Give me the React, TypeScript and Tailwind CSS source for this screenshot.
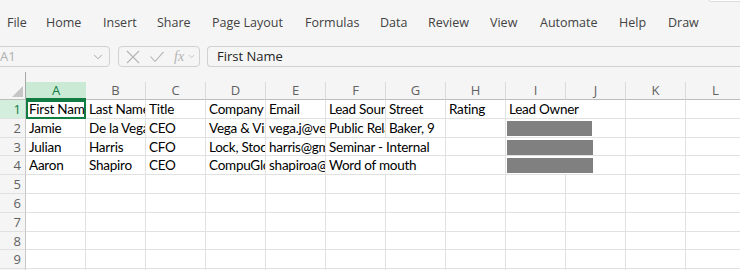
import { ChevronDown } from "lucide-react";

const tabs: [string, number][] = [
  ["File", 39],
  ["Home", 57],
  ["Insert", 54],
  ["Share", 55],
  ["Page Layout", 93],
  ["Formulas", 75],
  ["Data", 48],
  ["Review", 62],
  ["View", 50],
  ["Automate", 79],
  ["Help", 49],
  ["Draw", 60],
];

const cols = ["A", "B", "C", "D", "E", "F", "G", "H", "I", "J", "K", "L"];

type Cell = { text?: string; span?: number; redact?: number };

// each row: list of cells, span = number of columns the text overflows into
const rows: Cell[][] = [
  [
    { text: "First Name" },
    { text: "Last Name" },
    { text: "Title" },
    { text: "Company / Account" },
    { text: "Email" },
    { text: "Lead Source" },
    { text: "Street" },
    { text: "Rating" },
    { text: "Lead Owner", span: 2 },
    {},
    {},
  ],
  [
    { text: "Jamie" },
    { text: "De la Vega" },
    { text: "CEO" },
    { text: "Vega & Vimes" },
    { text: "vega.j@vega.com" },
    { text: "Public Relations" },
    { text: "Baker, 9" },
    {},
    { redact: 85, span: 2 },
    {},
    {},
  ],
  [
    { text: "Julian" },
    { text: "Harris" },
    { text: "CFO" },
    { text: "Lock, Stock" },
    { text: "harris@gmail.com" },
    { text: "Seminar - Internal", span: 2 },
    {},
    { redact: 86, span: 2 },
    {},
    {},
  ],
  [
    { text: "Aaron" },
    { text: "Shapiro" },
    { text: "CEO" },
    { text: "CompuGlobal" },
    { text: "shapiroa@cg.com" },
    { text: "Word of mouth", span: 2 },
    {},
    { redact: 86, span: 2 },
    {},
    {},
  ],
];

const cellFont = { fontFamily: "Lato, 'Liberation Sans', sans-serif" };

function DataRow({ n, cells }: { n: number; cells: Cell[] }) {
  const active = n === 1;
  return (
    <div className="flex h-[18.8px]">
      <div
        className={`w-[26px] shrink-0 border-r border-b border-r-[#c8c8c8] border-b-[#e1e1e1] pr-[4px] text-right text-[13px] leading-[18px] ${
          active ? "bg-[#d3eedd] text-[#107c41]" : "bg-[#f5f5f5] text-[#616161]"
        }`}
      >
        {n}
      </div>
      {cells.map((c, i) => (
        <div
          key={i}
          style={{ width: 60 * (c.span || 1) }}
          className={`relative shrink-0 overflow-hidden whitespace-nowrap border-r border-b border-[#e1e1e1] bg-white pl-[3px] text-[13.5px] leading-[18px] tracking-[-0.25px] text-black ${
            active && i === 0 ? "outline-2 -outline-offset-2 outline-[#107c41]" : ""
          }`}
        >
          <span style={cellFont}>{c.text}</span>
          {c.redact && (
            <div
              style={{ width: c.redact }}
              className="absolute left-[1px] top-[2px] h-[15px] bg-[#808080]"
            />
          )}
        </div>
      ))}
    </div>
  );
}

function EmptyRow({ n }: { n: number }) {
  return (
    <div className="flex h-[18.8px]">
      <div className="w-[26px] shrink-0 border-r border-b border-r-[#c8c8c8] border-b-[#e1e1e1] bg-[#f5f5f5] pr-[4px] text-right text-[13px] leading-[18px] text-[#616161]">
        {n}
      </div>
      {cols.map((c) => (
        <div key={c} className="h-full w-[60px] shrink-0 border-r border-b border-[#e1e1e1] bg-white" />
      ))}
    </div>
  );
}

export default function App() {
  return (
    <div
      className="relative h-[270px] w-[740px] overflow-hidden bg-[#f5f5f5] text-[#424242]"
      style={{ fontFamily: "'Open Sans', 'Noto Sans', sans-serif" }}
    >
      {/* title bar box edge peeking in top right */}
      <div className="absolute -top-[30px] right-[-10px] h-[32px] w-[44px] rounded-md border border-[#dcdcdc] bg-white" />

      {/* Ribbon tabs */}
      <div className="flex h-[46px] items-center pl-[7px] pt-[1px] text-[12.5px]">
        {tabs.map(([t, w]) => (
          <div key={t} style={{ width: w }} className="shrink-0 whitespace-nowrap">
            {t}
          </div>
        ))}
      </div>

      {/* Formula bar */}
      <div className="flex h-[21px] items-stretch">
        <div className="-ml-[3px] flex w-[113px] items-center justify-between rounded-[4px] border border-[#d1d1d1] pl-[2px] pr-[4px] text-[13px] text-[#b0b0b0]">
          <span>A1</span>
          <ChevronDown className="h-[14px] w-[14px] text-[#9a9a9a]" strokeWidth={1.5} />
        </div>
        <div className="ml-[8px] flex w-[82px] items-center rounded-[4px] border border-[#d1d1d1] pl-[7px] text-[#b4b4b4]">
          <svg width="14" height="14" viewBox="0 0 14 14" fill="none" stroke="currentColor" strokeWidth="1.1">
            <path d="M1 1 L13 13 M13 1 L1 13" />
          </svg>
          <svg className="ml-[10px]" width="14" height="12" viewBox="0 0 14 12" fill="none" stroke="currentColor" strokeWidth="1.1">
            <path d="M0.5 5.5 L5 10.5 L13.5 0.8" />
          </svg>
          <span
            className="ml-[10px] text-[14px] italic leading-none"
            style={{ fontFamily: "'Liberation Serif', serif" }}
          >
            fx
          </span>
          <ChevronDown className="ml-[3px] h-[9px] w-[9px]" strokeWidth={2} />
        </div>
        <div className="ml-[7px] flex flex-1 items-center rounded-l-[4px] border border-r-0 border-[#d1d1d1] pl-[9px] text-[13px] text-[#242424]">
          First Name
        </div>
      </div>

      {/* Grid */}
      <div className="mt-[5px]">
        {/* column headers */}
        <div className="flex h-[28px]">
          <div className="relative w-[26px] shrink-0 border-r border-b border-r-[#a8a8a8] border-b-[#bdbdbd]">
            <div className="absolute bottom-[2px] right-[2px] h-[11px] w-[11px] bg-[#c6c6c6] [clip-path:polygon(100%_0,100%_100%,0_100%)]" />
          </div>
          {cols.map((c, i) => (
            <div key={c} className="flex w-[60px] shrink-0 flex-col justify-end">
              <div
                className={`h-[18px] text-center text-[13px] leading-[17px] ${
                  i === 0
                    ? "border-b-2 border-[#107c41] bg-[#caead6] text-[#107c41]"
                    : "border-r border-b border-r-[#dadada] border-b-[#bdbdbd] text-[#616161]"
                }`}
              >
                {c}
              </div>
            </div>
          ))}
        </div>

        {rows.map((r, i) => (
          <DataRow key={i} n={i + 1} cells={r} />
        ))}
        {[5, 6, 7, 8, 9, 10].map((n) => (
          <EmptyRow key={n} n={n} />
        ))}
      </div>
    </div>
  );
}
